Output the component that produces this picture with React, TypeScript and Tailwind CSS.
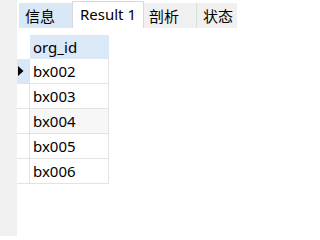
import React from "react";

const rows = ["bx002", "bx003", "bx004", "bx005", "bx006"];

export default function App() {
  return (
    <div className="w-[237px] h-[236px] flex bg-white overflow-hidden text-[15px] leading-none text-black font-['Noto_Sans','Noto_Sans_CJK_SC',sans-serif]">
      <div className="w-[17px] shrink-0 bg-[#f0f0f0]" />
      <div className="flex-1 min-w-0 flex flex-col">
        <div className="h-[28px] flex items-end pl-[2px] shrink-0">
          <div className="w-[53px] h-[25px] shrink-0 bg-[#d9e8f7] flex items-center pl-[6px] font-['Noto_Sans_CJK_SC',sans-serif]">
            信息
          </div>
          <div className="w-[72px] h-[27px] shrink-0 bg-white border-x border-t border-[#d9d9d9] flex items-center pl-[7px] pb-[1px]">
            Result 1
          </div>
          <div className="w-[53px] h-[25px] shrink-0 bg-[#f0f0f0] border-r border-[#dcdcdc] flex items-center pl-[5px] font-['Noto_Sans_CJK_SC',sans-serif]">
            剖析
          </div>
          <div className="w-[53px] h-[25px] shrink-0 bg-[#f0f0f0] flex items-center pl-[6px] font-['Noto_Sans_CJK_SC',sans-serif]">
            状态
          </div>
        </div>
        <div className="pt-[7px] flex flex-col">
          <div className="flex">
            <div className="w-[13px] h-[24px] shrink-0" />
            <div className="w-[79px] h-[24px] shrink-0 bg-[#dae8f7] pl-[3px] flex items-center">
              org_id
            </div>
          </div>
          {rows.map((r, i) => (
            <div key={r} className="flex">
              <div
                className={`w-[13px] h-[25px] shrink-0 border-b border-r border-[#e3e3e3] flex items-center pl-[1px] ${
                  i === 0 ? "bg-[#d9e8f7]" : "bg-white"
                }`}
              >
                {i === 0 && (
                  <svg width="6" height="10" viewBox="0 0 6 10">
                    <path d="M0 0 L5.5 5 L0 10 Z" fill="#000" />
                  </svg>
                )}
              </div>
              <div
                className={`w-[79px] h-[25px] shrink-0 border-b border-r border-[#e3e3e3] pl-[3px] flex items-center ${
                  i === 2 ? "bg-[#f7f7f7]" : "bg-white"
                }`}
              >
                {r}
              </div>
            </div>
          ))}
        </div>
      </div>
    </div>
  );
}
